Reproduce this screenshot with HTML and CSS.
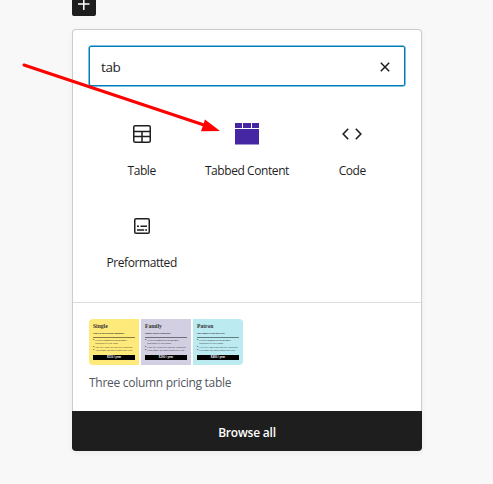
FILE: index.html
```html
<!DOCTYPE html>
<html lang="en">
<head>
<meta charset="utf-8">
<title>Block inserter</title>
<link rel="stylesheet" href="styles.css">
</head>
<body>
<div class="toggle"><svg width="24" height="24" viewBox="0 0 24 24"><path d="M11.8 6v12M6 12h11.5" stroke="#fff" stroke-width="1.5"/></svg></div>
<main class="inserter">
  <div class="search"><span class="query">tab</span>
    <svg class="clear" width="12" height="12" viewBox="0 0 12 12"><path d="M1.8 1.8l8.4 8.4M10.2 1.8l-8.4 8.4" stroke="#1e1e1e" stroke-width="1.5"/></svg>
  </div>
  <div class="blocks">
    <div class="block"><svg class="icon" viewBox="0 0 24 24"><g fill="none" stroke="#1e1e1e" stroke-width="1.5"><rect x="3.75" y="3.75" width="16.5" height="16.5" rx="1.5"/><path d="M4 9.5h16M4 14.5h16M12 9.5V20"/></g></svg><span>Table</span></div>
    <div class="block"><svg class="icon tabs" viewBox="0 0 24 22"><path fill="#4527a4" d="M0 0h7v5H0zM8 0h8v5H8zM17 0h7v5h-7zM0 6h24v15.6H0z"/></svg><span>Tabbed Content</span></div>
    <div class="block"><svg class="icon" viewBox="0 0 24 24"><path d="M8.2 6.8L3.2 12l5 5.2M15.8 6.8l5 5.2-5 5.2" fill="none" stroke="#1e1e1e" stroke-width="1.6"/></svg><span>Code</span></div>
    <div class="block"><svg class="icon" viewBox="0 0 24 24"><g fill="none" stroke="#1e1e1e" stroke-width="1.5"><rect x="4.75" y="4.75" width="14.5" height="14.5" rx="1.3"/><path d="M7 12.3h2M10.5 12.3h6.5M7 16h7.2M15.2 16h1.8"/></g></svg><span>Preformatted</span></div>
  </div>
  <div class="patterns">
    <div class="preview">
      <section class="plan single"><h3>Single</h3><p>Enroll in our growing community.</p><ul><li>General admission and member discounts for one adult</li><li>One free ticket per special exhibition</li><li>Two single-use guest passes per year</li></ul><div class="price">$110 / year</div></section>
      <section class="plan family"><h3>Family</h3><p>Support special exhibitions.</p><ul><li>General admission and member discounts for two adults</li><li>Four free tickets per special exhibition</li><li>Four single-use guest passes per year</li></ul><div class="price">$200 / year</div></section>
      <section class="plan patron"><h3>Patron</h3><p>Take support to the next level.</p><ul><li>General admission and member discounts for two adults</li><li>Five free tickets per special exhibition</li><li>Six single-use guest passes per year</li></ul><div class="price">$400 / year</div></section>
    </div>
    <div class="pattern-name"><span>Three column pricing table</span></div>
  </div>
  <div class="browse"><span>Browse all</span></div>
</main>
<svg class="arrow" width="493" height="160" viewBox="0 0 493 160"><path d="M24 65L207 126" stroke="#f00" stroke-width="3" stroke-linecap="round"/><path d="M205 119.5L220 131l-19 .3z" fill="#f00"/></svg>
</body>
</html>
```
FILE: styles.css
```css
* { box-sizing: border-box; }
body {
  margin: 0;
  height: 484px;
  overflow: hidden;
  background: #f8f8f8;
  color: #1e1e1e;
  font-family: "Open Sans", "Noto Sans", sans-serif;
  font-size: 12px;
}
svg { display: block; flex: none; }
.toggle {
  width: 24px;
  height: 24px;
  margin: -8px 0 0 72px;
  background: #1e1e1e;
  border-radius: 2px;
}
.inserter {
  width: 350px;
  height: 422px;
  margin: 13px 0 0 72px;
  display: flex;
  flex-direction: column;
  background: #fff;
  border: 1px solid #ccc;
  border-bottom: 0;
  border-radius: 4px;
  box-shadow: 0 2px 6px rgba(0, 0, 0, .05);
}
.search {
  flex: none;
  height: 40px;
  margin: 16px 16px 0;
  padding: 1px 13px 0 11px;
  display: flex;
  align-items: center;
  justify-content: space-between;
  border: 1px solid #007cba;
  box-shadow: 0 0 0 .5px #007cba;
  border-radius: 2px;
  font-size: 13.5px;
}
.query { letter-spacing: -.35px; }
.blocks {
  flex: none;
  display: grid;
  grid-template-columns: repeat(3, 105.3px);
  grid-auto-rows: 92px;
  margin: 16px 16px 0;
  height: 200px;
}
.block {
  display: flex;
  flex-direction: column;
  align-items: center;
  padding-top: 20px;
}
.icon { width: 24px; height: 24px; }
.tabs { height: 22px; margin: 1px 0; }
.block span {
  margin-top: 16px;
  line-height: 18px;
  white-space: nowrap;
  letter-spacing: -.42px;
}
.patterns {
  flex: none;
  height: 109px;
  border-top: 1px solid #ddd;
  padding: 16px;
}
.preview {
  width: 154px;
  height: 46px;
  display: grid;
  grid-template-columns: repeat(3, 50px);
  gap: 2px;
  overflow: hidden;
  border-radius: 4px;
}
.plan {
  padding: 4px;
  color: #222;
  font: 2.3px/3.3px "Liberation Serif", serif;
  overflow: hidden;
}
.single { background: #fee97b; }
.family { background: #d1cfe1; }
.patron { background: #bbeaf0; }
.plan h3 { margin: 0; font-size: 5.6px; line-height: 7px; font-weight: bold; color: #333; }
.plan p { margin: 1.6px 0 0; font-size: 2.2px; font-weight: bold; line-height: 3.5px; }
.plan ul {
  margin: 1.6px 0 0;
  padding: 2.5px 0 0 2.3px;
  height: 18px;
  list-style: none;
  background: linear-gradient(#0007, #0007) top / 100% 1px no-repeat;
}
.plan li { padding-right: 7px; font-size: 2.5px; }
.plan li::before { content: "•"; display: inline-block; width: 2.3px; margin-left: -2.3px; font-size: 3.5px; line-height: 1px; }
.plan li:nth-child(n+2) { padding: 0; white-space: nowrap; }
.price {
  height: 5.5px;
  background: #000;
  color: #fff;
  font: bold 2.8px/5.5px "Liberation Sans", sans-serif;
  text-align: center;
}
.pattern-name {
  margin-top: 9px;
  line-height: 18px;
  color: #50575e;
  white-space: nowrap;
  letter-spacing: -.28px;
}
.browse {
  flex: none;
  height: 40px;
  margin: auto -1px 0;
  padding-top: 2px;
  display: flex;
  align-items: center;
  justify-content: center;
  background: #1e1e1e;
  color: #fff;
  border-radius: 0 0 4px 4px;
  font-weight: 600;
  letter-spacing: -.2px;
}
.arrow { position: absolute; left: 0; top: 0; }
```
